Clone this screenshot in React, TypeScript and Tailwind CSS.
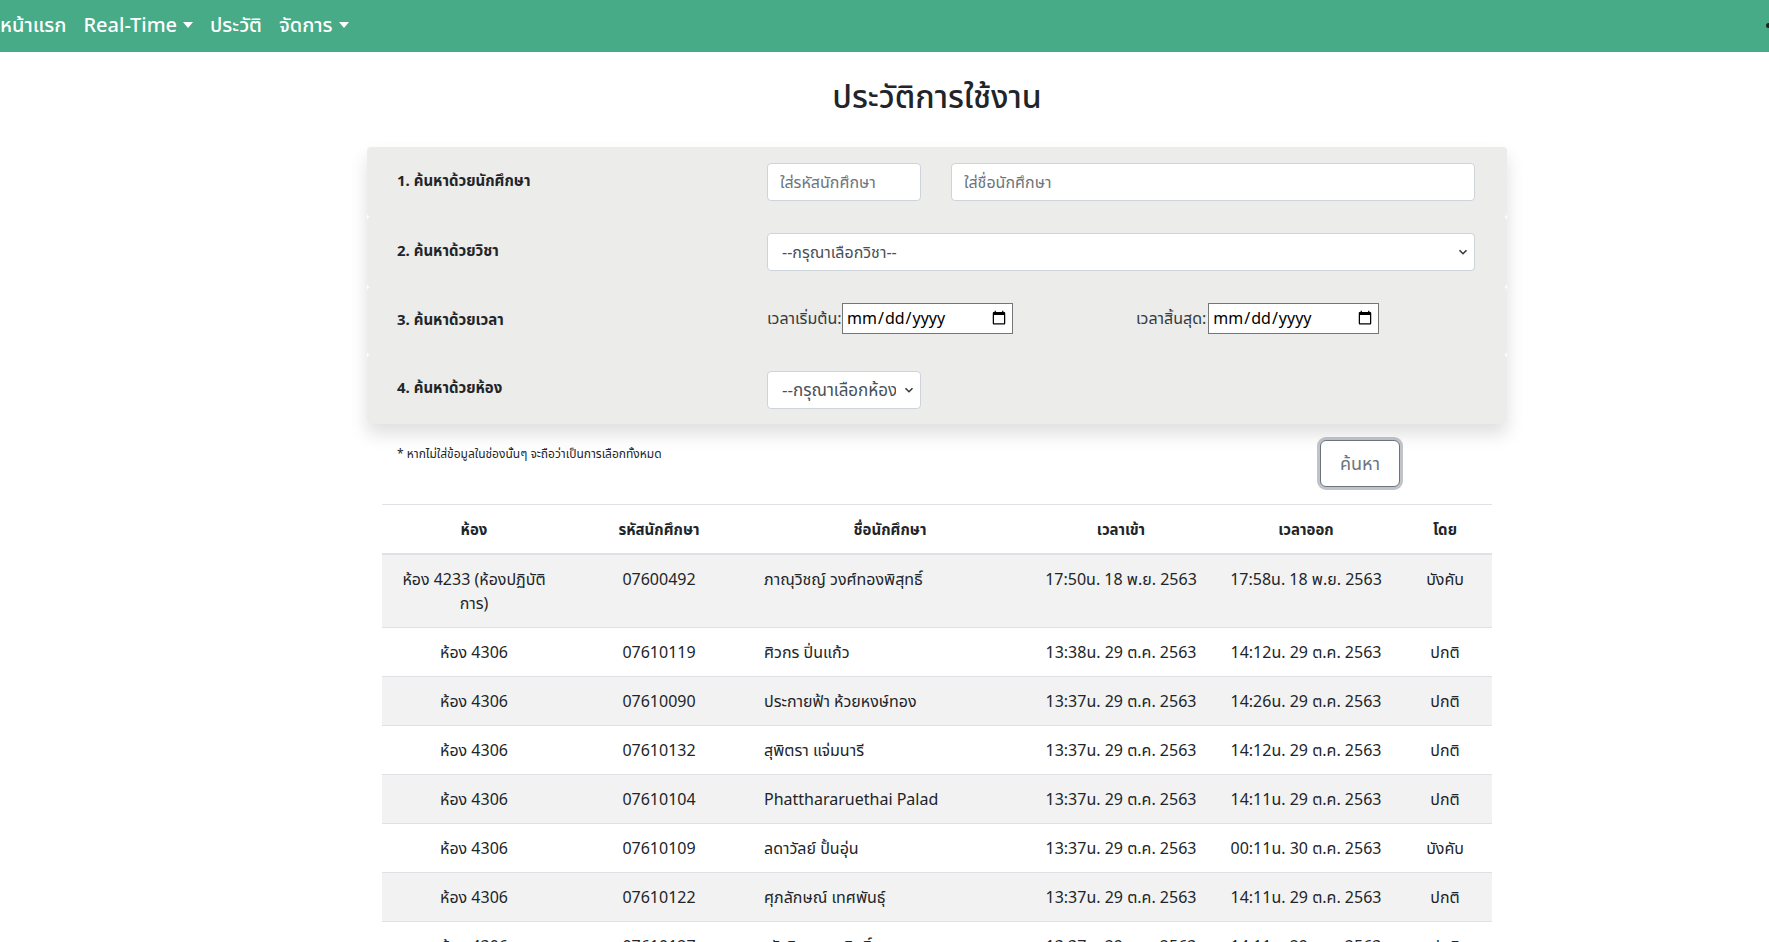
import React from "react";

const rows = [
  ["ห้อง 4233 (ห้องปฏิบัติ|การ)", "07600492", "ภาณุวิชญ์ วงศ์ทองพิสุทธิ์", "17:50น. 18 พ.ย. 2563", "17:58น. 18 พ.ย. 2563", "บังคับ"],
  ["ห้อง 4306", "07610119", "ศิวกร ปิ่นแก้ว", "13:38น. 29 ต.ค. 2563", "14:12น. 29 ต.ค. 2563", "ปกติ"],
  ["ห้อง 4306", "07610090", "ประกายฟ้า ห้วยหงษ์ทอง", "13:37น. 29 ต.ค. 2563", "14:26น. 29 ต.ค. 2563", "ปกติ"],
  ["ห้อง 4306", "07610132", "สุพิตรา แจ่มนารี", "13:37น. 29 ต.ค. 2563", "14:12น. 29 ต.ค. 2563", "ปกติ"],
  ["ห้อง 4306", "07610104", "Phatthararuethai Palad", "13:37น. 29 ต.ค. 2563", "14:11น. 29 ต.ค. 2563", "ปกติ"],
  ["ห้อง 4306", "07610109", "ลดาวัลย์ ปั้นอุ่น", "13:37น. 29 ต.ค. 2563", "00:11น. 30 ต.ค. 2563", "บังคับ"],
  ["ห้อง 4306", "07610122", "ศุภลักษณ์ เทศพันธุ์", "13:37น. 29 ต.ค. 2563", "14:11น. 29 ต.ค. 2563", "ปกติ"],
  ["ห้อง 4306", "07610127", "ณัฐธิดา ทองสิทธิ์", "13:37น. 29 ต.ค. 2563", "14:11น. 29 ต.ค. 2563", "ปกติ"],
];

function Caret() {
  return (
    <span className="inline-block ml-[6px] w-0 h-0 border-l-[5px] border-r-[5px] border-t-[6px] border-l-transparent border-r-transparent border-t-white align-middle" />
  );
}

function Chevron() {
  return (
    <svg className="absolute right-[7px] top-1/2 -translate-y-1/2 pointer-events-none" width="10" height="8" viewBox="0 0 10 8">
      <path d="M1.5 2.2 L5 5.7 L8.5 2.2" fill="none" stroke="#343a40" strokeWidth="1.6" />
    </svg>
  );
}

export default function App() {
  const font = { fontFamily: '"Noto Sans", "Noto Sans Thai", "Open Sans", sans-serif' };
  return (
    <div className="min-h-screen bg-white text-[#212529]" style={font}>
      <nav className="relative h-[52px] bg-[#46ab86] flex items-center">
        <div className="flex items-center text-white text-[20px] font-medium leading-none pb-[2px]">
          <span>หน้าแรก</span>
          <span className="ml-[17px] flex items-center">Real-Time<Caret /></span>
          <span className="ml-[17px]">ประวัติ</span>
          <span className="ml-[17px] flex items-center">จัดการ<Caret /></span>
        </div>
        <span className="absolute right-0 top-[23px] w-[3px] h-[5px] rounded-l-full bg-[#222]" />
      </nav>

      <div className="ml-[367px] w-[1140px]">
        <h2 className="mt-[25px] mb-[32px] h-[38px] text-center text-[32px] leading-[38px] font-medium">ประวัติการใช้งาน</h2>

        <div className="rounded-[4px] shadow-[0_10px_18px_rgba(0,0,0,0.13)] text-[15px]">
          <div className="h-[70px] flex items-center bg-[#ececea] rounded-[4px]">
            <div className="w-[400px] pl-[30px] font-bold pb-[4px]">1. ค้นหาด้วยนักศึกษา</div>
            <input placeholder="ใส่รหัสนักศึกษา" className="w-[154px] h-[38px] bg-white border border-[#ced4da] rounded-[4px] px-[12px] text-[16px] placeholder:text-[#6c757d] outline-none" />
            <input placeholder="ใส่ชื่อนักศึกษา" className="ml-[30px] w-[524px] h-[38px] bg-white border border-[#ced4da] rounded-[4px] px-[12px] text-[16px] placeholder:text-[#6c757d] outline-none" />
          </div>
          <div className="h-[70px] flex items-center bg-[#ececea] rounded-[4px]">
            <div className="w-[400px] pl-[30px] font-bold pb-[4px]">2. ค้นหาด้วยวิชา</div>
            <div className="relative w-[708px] h-[38px]">
              <select className="appearance-none w-full h-full bg-white border border-[#ced4da] rounded-[4px] pl-[14px] pr-[30px] text-[16px] text-[#495057] outline-none">
                <option>--กรุณาเลือกวิชา--</option>
              </select>
              <Chevron />
            </div>
          </div>
          <div className="h-[68px] flex items-center bg-[#ececea] rounded-[4px]">
            <div className="w-[400px] pl-[30px] font-bold pb-[4px]">3. ค้นหาด้วยเวลา</div>
            <div className="w-[369px] flex items-center text-[16px] mb-[6px]">
              <span className="text-[#343a40]">เวลาเริ่มต้น:</span>
              <input type="date" className="ml-auto mr-[123px] w-[171px] h-[31px] bg-white border border-[#767676] px-[3px] text-[16px] text-black" />
            </div>
            <div className="flex items-center text-[16px] mb-[6px]">
              <span className="text-[#343a40]">เวลาสิ้นสุด:</span>
              <input type="date" className="ml-[2px] w-[171px] h-[31px] bg-white border border-[#767676] px-[3px] text-[16px] text-black" />
            </div>
          </div>
          <div className="h-[69px] flex items-center bg-[#ececea] rounded-[4px]">
            <div className="w-[400px] pl-[30px] font-bold pb-[4px]">4. ค้นหาด้วยห้อง</div>
            <div className="relative w-[154px] h-[38px]">
              <select className="appearance-none w-full h-full bg-white border border-[#ced4da] rounded-[4px] pl-[14px] pr-[24px] text-[17px] text-[#495057] outline-none overflow-hidden">
                <option>--กรุณาเลือกห้อง--</option>
              </select>
              <Chevron />
            </div>
          </div>
        </div>

        <div className="flex items-start mt-[16px]">
          <p className="flex-1 pl-[30px] pt-[5px] text-[12px] leading-[18px]">* หากไม่ใส่ข้อมูลในช่องนั้นๆ จะถือว่าเป็นการเลือกทั้งหมด</p>
          <button className="mr-[107px] w-[80px] h-[47px] rounded-[6px] border border-[#6c757d] bg-white text-[#6c757d] text-[18px] shadow-[0_0_0_3px_rgba(130,138,145,0.5)]">ค้นหา</button>
        </div>

        <table className="mx-[15px] mt-[17px] w-[1110px] table-fixed border-collapse text-[16px]">
          <colgroup>
            <col className="w-[184px]" />
            <col className="w-[186px]" />
            <col className="w-[276px]" />
            <col className="w-[186px]" />
            <col className="w-[184px]" />
            <col className="w-[94px]" />
          </colgroup>
          <thead>
            <tr className="border-t border-[#dee2e6] border-b-2">
              {["ห้อง", "รหัสนักศึกษา", "ชื่อนักศึกษา", "เวลาเข้า", "เวลาออก", "โดย"].map((h) => (
                <th key={h} className="px-[12px] py-[12px] leading-[24px] text-center font-bold text-[15px]">{h}</th>
              ))}
            </tr>
          </thead>
          <tbody>
            {rows.map((r, i) => (
              <tr key={i} className={`border-t border-[#dee2e6] ${i % 2 === 0 ? "bg-[#f2f2f2]" : "bg-white"}`}>
                <td className="px-[12px] py-[12px] leading-[24px] text-center align-top">
                  {r[0].split("|").map((p, k) => (
                    <React.Fragment key={k}>{k > 0 && <br />}{p}</React.Fragment>
                  ))}
                </td>
                <td className="px-[12px] py-[12px] leading-[24px] text-center align-top">{r[1]}</td>
                <td className="px-[12px] py-[12px] leading-[24px] text-left align-top">{r[2]}</td>
                <td className="px-[12px] py-[12px] leading-[24px] text-center align-top">{r[3]}</td>
                <td className="px-[12px] py-[12px] leading-[24px] text-center align-top">{r[4]}</td>
                <td className="px-[12px] py-[12px] leading-[24px] text-center align-top">{r[5]}</td>
              </tr>
            ))}
          </tbody>
        </table>
      </div>
    </div>
  );
}
